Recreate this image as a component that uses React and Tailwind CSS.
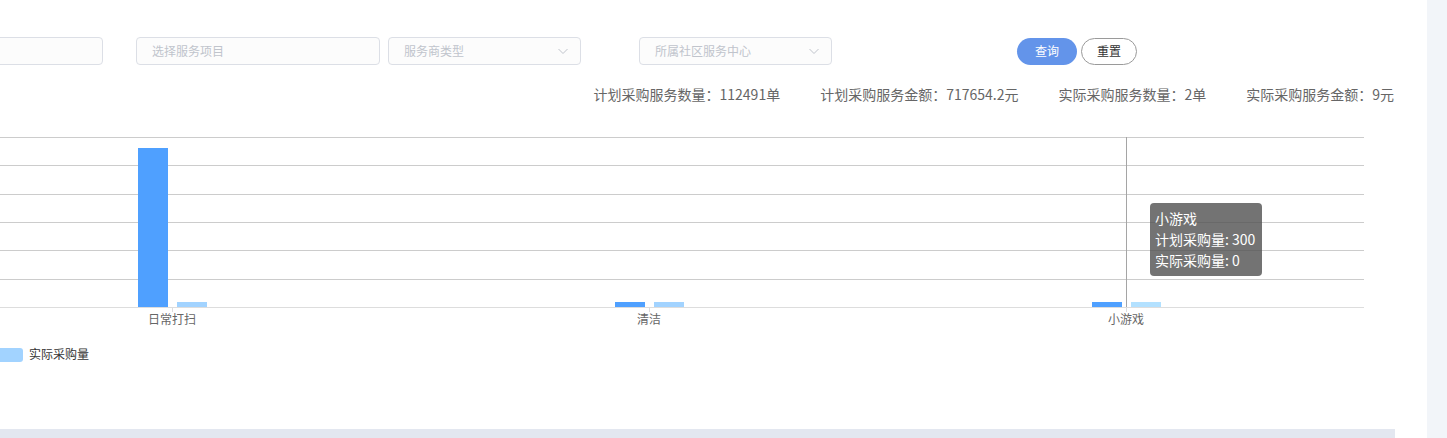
import React from 'react';

const FONT = { fontFamily: '"Noto Sans CJK SC", "Microsoft YaHei", sans-serif' };

const Chevron = () => (
  <svg width="12" height="12" viewBox="0 0 12 12" className="text-[#c0c4cc]">
    <path d="M1.5 4l4.5 4.5L10.5 4" fill="none" stroke="currentColor" strokeWidth="1" />
  </svg>
);

const stats = [
  '计划采购服务数量：112491单',
  '计划采购服务金额：717654.2元',
  '实际采购服务数量：2单',
  '实际采购服务金额：9元',
];

const categories = [
  { name: '日常打扫', x: 172, plan: 159, real: 5 },
  { name: '清洁', x: 649, plan: 5, real: 5 },
  { name: '小游戏', x: 1126, plan: 5, real: 5, active: true },
];

const Chart = () => {
  const top = 17;
  const base = 187;
  const grid = [0, 1, 2, 3, 4, 5].map((i) => top + (i * (base - top)) / 6);
  return (
    <svg width="1395" height="260" className="block">
      {grid.map((y) => (
        <line key={y} x1="0" x2="1364" y1={Math.round(y) + 0.5} y2={Math.round(y) + 0.5} stroke="#ccc" />
      ))}
      <line x1="1126.5" x2="1126.5" y1={top} y2={base} stroke="#a5a5a5" />
      {categories.map((c) => (
        <g key={c.name}>
          <rect x={c.x - 34} y={base - c.plan} width="30" height={c.plan} fill="#4fa0ff" />
          <rect x={c.x + 5} y={base - c.real} width="30" height={c.real} fill={c.active ? '#b3e1ff' : '#a2d3ff'} />
          <line x1={c.x + 0.5} x2={c.x + 0.5} y1={base} y2={base + 5} stroke="#ddd" />
          <text x={c.x} y="204" textAnchor="middle" fontSize="12" fill="#666">{c.name}</text>
        </g>
      ))}
      <line x1="0" x2="1364" y1={base + 0.5} y2={base + 0.5} stroke="#ddd" />
      <rect x="-6" y="228" width="29" height="14" rx="3" fill="#a2d3ff" />
      <text x="29" y="239" fontSize="12" fill="#333">实际采购量</text>
    </svg>
  );
};

export default function App() {
  return (
    <div className="flex w-[1447px] h-[438px] overflow-hidden bg-white" style={FONT}>
      <div className="w-[1427px] flex flex-col">
        <div className="w-[1395px] h-[429px] relative overflow-hidden">
          <div className="flex items-center pt-[37px] ml-[-97px]">
            <div className="w-[200px] h-[28px] border border-[#dcdfe6] rounded bg-[#fcfcfc]" />
            <div className="ml-[33px] w-[244px] h-[28px] border border-[#dcdfe6] rounded bg-[#fcfcfc] flex items-center px-[15px] text-[12px] text-[#c0c4cc]">
              选择服务项目
            </div>
            <div className="ml-[8px] w-[193px] h-[28px] border border-[#dcdfe6] rounded bg-[#fcfcfc] flex items-center justify-between pl-[15px] pr-[11px] text-[12px] text-[#c0c4cc]">
              服务商类型
              <Chevron />
            </div>
            <div className="ml-[58px] w-[193px] h-[28px] border border-[#dcdfe6] rounded bg-[#fcfcfc] flex items-center justify-between pl-[15px] pr-[11px] text-[12px] text-[#c0c4cc]">
              所属社区服务中心
              <Chevron />
            </div>
            <button className="ml-[185px] w-[60px] h-[27px] rounded-full bg-[#6394ea] text-white text-[12px]">
              查询
            </button>
            <button className="ml-[4px] w-[56px] h-[27px] rounded-full border border-[#9a9a9a] bg-white text-[#333] text-[12px]">
              重置
            </button>
          </div>
          <div className="flex justify-end gap-[40px] mt-[20px] h-[18px] items-center text-[14px] text-[#666] pr-[1px]">
            {stats.map((s) => (
              <span key={s}>{s}</span>
            ))}
          </div>
          <div className="mt-[17px]">
            <Chart />
          </div>
          <div className="absolute left-[1150px] top-[203px] w-[112px] h-[73px] rounded bg-[rgba(80,80,80,0.8)] text-white text-[14px] leading-[21px] px-[5px] py-[5px]">
            <div>小游戏</div>
            <div>计划采购量: 300</div>
            <div>实际采购量: 0</div>
          </div>
        </div>
        <div className="w-[1395px] h-[9px] bg-[#e3e7f0]" />
      </div>
      <div className="w-[20px] h-full bg-[#f2f5f9]" />
    </div>
  );
}
